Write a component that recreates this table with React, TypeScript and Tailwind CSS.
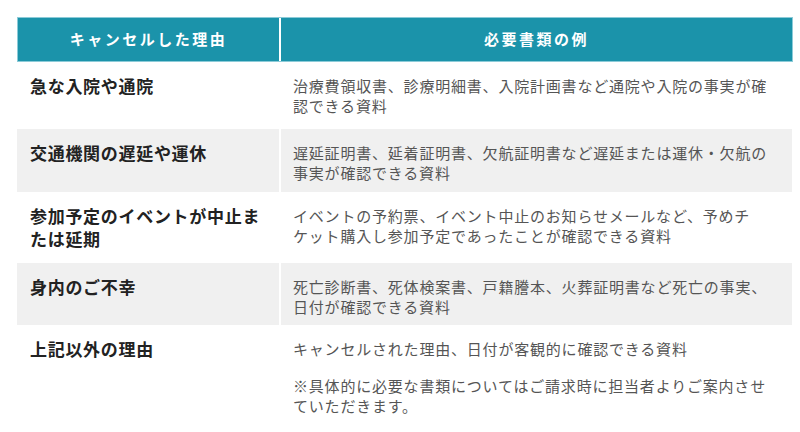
import React from "react";

const rows: { h: string; gray: boolean; left: string[]; right: string[][] }[] = [
  {
    h: "h-[67px]",
    gray: false,
    left: ["急な入院や通院"],
    right: [["治療費領収書、診療明細書、入院計画書など通院や入院の事実が確", "認できる資料"]],
  },
  {
    h: "h-[63px]",
    gray: true,
    left: ["交通機関の遅延や運休"],
    right: [["遅延証明書、延着証明書、欠航証明書など遅延または運休・欠航の", "事実が確認できる資料"]],
  },
  {
    h: "h-[71px]",
    gray: false,
    left: ["参加予定のイベントが中止ま", "たは延期"],
    right: [["イベントの予約票、イベント中止のお知らせメールなど、予めチ", "ケット購入し参加予定であったことが確認できる資料"]],
  },
  {
    h: "h-[62px]",
    gray: true,
    left: ["身内のご不幸"],
    right: [["死亡診断書、死体検案書、戸籍謄本、火葬証明書など死亡の事実、", "日付が確認できる資料"]],
  },
  {
    h: "h-[110px]",
    gray: false,
    left: ["上記以外の理由"],
    right: [
      ["キャンセルされた理由、日付が客観的に確認できる資料"],
      ["※具体的に必要な書類についてはご請求時に担当者よりご案内させ", "ていただきます。"],
    ],
  },
];

export default function App() {
  return (
    <div
      className="w-[800px] h-[432px] overflow-hidden bg-white pt-[17px] pl-[17px]"
      style={{ fontFamily: '"Noto Sans CJK JP", "Noto Sans", sans-serif' }}
    >
      <div className="w-[776px]">
        <div className="flex h-[45px] gap-[2px] border border-[#8ccbd8] bg-white">
          <div className="w-[261px] flex items-center justify-center bg-[#1b93aa] text-white font-bold text-[15px] tracking-[2.5px]">
            キャンセルした理由
          </div>
          <div className="flex-1 flex items-center justify-center bg-[#1b93aa] text-white font-bold text-[15px] tracking-[2.5px]">
            必要書類の例
          </div>
        </div>
        {rows.map((r, i) => (
          <div key={i} className={`flex gap-[2px] ${r.h}`}>
            <div
              className={`w-[262px] pl-[13px] pr-[6px] pt-[12px] text-[17px] leading-[23px] font-bold text-[#222] tracking-[0.7px] ${
                r.gray ? "bg-[#f0f0f0]" : "bg-white"
              }`}
            >
              {r.left.map((t, j) => (
                <div key={j} className="whitespace-nowrap">
                  {t}
                </div>
              ))}
            </div>
            <div
              className={`w-[511px] pl-[12px] pr-[6px] pt-[14px] text-[15px] leading-[20px] text-[#555] tracking-[0.8px] flex flex-col gap-[17px] ${
                r.gray ? "bg-[#f0f0f0]" : "bg-white"
              }`}
            >
              {r.right.map((p, j) => (
                <div key={j}>
                  {p.map((t, k) => (
                    <div key={k} className="whitespace-nowrap">
                      {t}
                    </div>
                  ))}
                </div>
              ))}
            </div>
          </div>
        ))}
      </div>
    </div>
  );
}
